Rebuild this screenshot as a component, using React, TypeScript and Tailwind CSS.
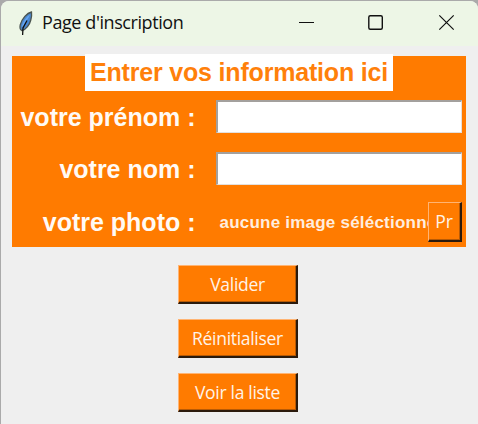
import type { ReactNode } from "react";

function Feather() {
  return (
    <svg width="16" height="26" viewBox="0 0 16 26" className="block">
      <path d="M13.5 1 C9 2 4 7.5 2.2 14 C1.6 17 2.4 19 4 19.6 C8 18.5 11.8 13.5 12.8 9 C13.6 6.5 13.8 3.5 13.5 1Z" fill="#4d86c8" stroke="#4b5450" strokeWidth="1.3" />
      <path d="M12 3.5 C8 6 5 10.5 3.6 16 L5.4 15 L10.6 6.5Z" fill="#63a5f3" />
      <path d="M11.8 6 L6.8 15.5 L8.4 14.5 C10.6 11.5 11.6 9 11.8 6Z" fill="#4488dc" />
      <path d="M9 9.5 L5 17 L4.6 24" fill="none" stroke="#111" strokeWidth="1.3" />
    </svg>
  );
}

function TitleBar() {
  return (
    <header className="flex h-[45px] shrink-0 items-center bg-[#edf6e6] pl-[17px]">
      <Feather />
      <h1 className="ml-[8px] flex-1 whitespace-nowrap pb-[3px] font-['Open_Sans','Noto_Sans',sans-serif] text-[18px] leading-6 tracking-[-0.42px] text-[#111]">
        Page d'inscription
      </h1>
      <svg width="180" height="45" viewBox="298 1 180 45" fill="none" stroke="#111" className="block">
        <path d="M299 22.5H314" strokeWidth="1.1" />
        <rect x="368.8" y="15.7" width="13.5" height="13.5" rx="1.5" strokeWidth="1.4" />
        <path d="M439.3 15.3L453.7 29.7M453.7 15.3L439.3 29.7" strokeWidth="1.2" />
      </svg>
    </header>
  );
}

function Raised({ children, className }: { children: ReactNode; className: string }) {
  return (
    <button
      className={`flex items-center justify-center whitespace-nowrap border-t border-l border-r-2 border-b-2 border-t-[#ffb473] border-l-[#ffb473] border-r-[#2b1a0c] border-b-[#2b1a0c] bg-[#ff7b00] pb-px font-['Open_Sans','Noto_Sans',sans-serif] text-[17.5px] leading-6 text-[#fff3e8] shadow-[inset_-1px_-1px_0_#b85a05] ${className}`}
    >
      {children}
    </button>
  );
}

function Row({ label, children }: { label: string; children: ReactNode }) {
  return (
    <div className="flex h-[40px] items-center">
      <label className="w-[184px] whitespace-nowrap text-right text-[25px] leading-[30px] font-bold text-[#fffaf5]">
        {label}
      </label>
      <div className="ml-[20px] flex w-[246px] items-center">{children}</div>
    </div>
  );
}

function Entry() {
  return (
    <input
      className="-mt-px h-[33px] w-full border-t-2 border-l-2 border-r border-b border-t-[#a3a09d] border-l-[#a3a09d] border-r-[#e3e0dd] border-b-[#e3e0dd] bg-white px-2 text-black outline-none"
    />
  );
}

export default function App() {
  return (
    <div className="flex h-[424px] w-[478px] flex-col overflow-hidden bg-[#aaa] pt-px pl-px font-['Liberation_Sans',Arial,sans-serif]">
      <div className="flex flex-1 flex-col overflow-hidden rounded-t-[8px] bg-[#efefef]">
        <TitleBar />
        <main className="flex flex-col">
          <fieldset className="mt-[10px] ml-[10.5px] flex h-[191px] w-[454.5px] flex-col bg-[#ff7b00]">
            <div className="-mt-[2px] ml-[73.5px] flex h-[37px] w-[308px] items-center justify-center whitespace-nowrap bg-white pb-[2px] text-[25px] leading-[30px] font-bold tracking-[-0.18px] text-[#ff800a]">
              Entrer vos information ici
            </div>
            <div className="mt-[6px] flex flex-col gap-[12.4px]">
              <Row label="votre prénom :"><Entry /></Row>
              <Row label="votre nom :"><Entry /></Row>
              <Row label="votre photo :">
                <span className="w-[212px] overflow-hidden whitespace-nowrap pl-[4px] pt-[2px] text-[17px] leading-6 font-bold tracking-[0.22px] text-[#ffeddf]">
                  aucune image séléctionne
                </span>
                <Raised className="mt-px h-[40px] w-[34px] shrink-0">Pr</Raised>
              </Row>
            </div>
          </fieldset>
          <div className="mt-[18px] ml-[177px] flex w-[120px] flex-col gap-[15px]">
            <Raised className="h-[39px] tracking-[-0.3px]">Valider</Raised>
            <Raised className="h-[39px] tracking-[-0.3px]">Réinitialiser</Raised>
            <Raised className="h-[39px] tracking-[-0.3px]">Voir la liste</Raised>
          </div>
        </main>
      </div>
    </div>
  );
}
